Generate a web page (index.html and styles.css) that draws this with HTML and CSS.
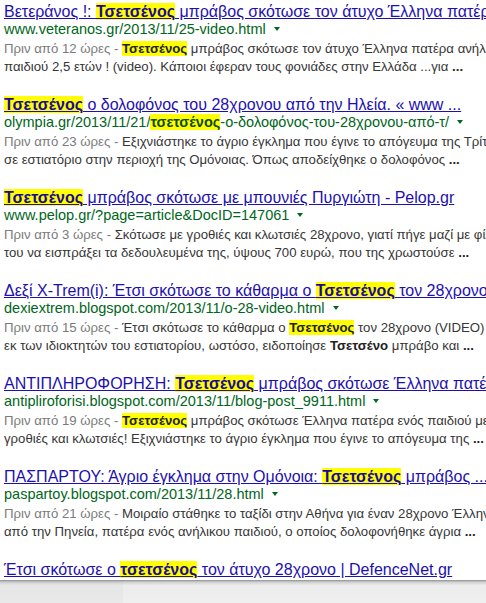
FILE: index.html
```html
<!DOCTYPE html>
<html lang="el">
<head>
<meta charset="utf-8">
<title>Τσετσένος - Αναζήτηση</title>
<link rel="stylesheet" href="styles.css">
</head>
<body>
<div class="page">
  <div class="results">

    <div class="result">
      <div class="title"><a href="#">Βετεράνος !: <b class="hl">Τσετσένος</b> μπράβος σκότωσε τον άτυχο Έλληνα πατέρα ...</a></div>
      <div class="url">www.veteranos.gr/2013/11/25-video.html<span class="caret"></span></div>
      <div class="snippet">
        <span class="line"><span class="date">Πριν από 12 ώρες - </span><b class="hl">Τσετσένος</b> μπράβος σκότωσε τον άτυχο Έλληνα πατέρα ανήλικου</span>
        <span class="line">παιδιού 2,5 ετών ! (video). Κάποιοι έφεραν τους φονιάδες στην Ελλάδα ...για <b>...</b></span>
      </div>
    </div>

    <div class="result">
      <div class="title"><a href="#"><b class="hl">Τσετσένος</b> ο δολοφόνος του 28χρονου από την Ηλεία. « www ...</a></div>
      <div class="url">olympia.gr/2013/11/21/<b class="hl">τσετσένος</b>-ο-δολοφόνος-του-28χρονου-από-τ/<span class="caret"></span></div>
      <div class="snippet">
        <span class="line"><span class="date">Πριν από 23 ώρες - </span>Εξιχνιάστηκε το άγριο έγκλημα που έγινε το απόγευμα της Τρίτης</span>
        <span class="line">σε εστιατόριο στην περιοχή της Ομόνοιας. Όπως αποδείχθηκε ο δολοφόνος <b>...</b></span>
      </div>
    </div>

    <div class="result">
      <div class="title"><a href="#"><b class="hl">Τσετσένος</b> μπράβος σκότωσε με μπουνιές Πυργιώτη - Pelop.gr</a></div>
      <div class="url">www.pelop.gr/?page=article&amp;DocID=147061<span class="caret"></span></div>
      <div class="snippet">
        <span class="line"><span class="date">Πριν από 3 ώρες - </span>Σκότωσε με γροθιές και κλωτσιές 28χρονο, γιατί πήγε μαζί με φίλο</span>
        <span class="line">του να εισπράξει τα δεδουλευμένα της, ύψους 700 ευρώ, που της χρωστούσε <b>...</b></span>
      </div>
    </div>

    <div class="result">
      <div class="title"><a href="#">Δεξί X-Trem(i): Έτσι σκότωσε το κάθαρμα ο <b class="hl">Τσετσένος</b> τον 28χρονο ...</a></div>
      <div class="url">dexiextrem.blogspot.com/2013/11/o-28-video.html<span class="caret"></span></div>
      <div class="snippet">
        <span class="line"><span class="date">Πριν από 15 ώρες - </span>Έτσι σκότωσε το κάθαρμα ο <b class="hl">Τσετσένος</b> τον 28χρονο (VIDEO) Ένας</span>
        <span class="line">εκ των ιδιοκτητών του εστιατορίου, ωστόσο, ειδοποίησε <b>Τσετσένο</b> μπράβο και <b>...</b></span>
      </div>
    </div>

    <div class="result">
      <div class="title"><a href="#">ΑΝΤΙΠΛΗΡΟΦΟΡΗΣΗ: <b class="hl">Τσετσένος</b> μπράβος σκότωσε Έλληνα πατέρα ...</a></div>
      <div class="url">antipliroforisi.blogspot.com/2013/11/blog-post_9911.html<span class="caret"></span></div>
      <div class="snippet">
        <span class="line"><span class="date">Πριν από 19 ώρες - </span><b class="hl">Τσετσένος</b> μπράβος σκότωσε Έλληνα πατέρα ενός παιδιού με</span>
        <span class="line">γροθιές και κλωτσιές! Εξιχνιάστηκε το άγριο έγκλημα που έγινε το απόγευμα της <b>...</b></span>
      </div>
    </div>

    <div class="result">
      <div class="title"><a href="#">ΠΑΣΠΑΡΤΟΥ: Άγριο έγκλημα στην Ομόνοια: <b class="hl">Τσετσένος</b> μπράβος ...</a></div>
      <div class="url">paspartoy.blogspot.com/2013/11/28.html<span class="caret"></span></div>
      <div class="snippet">
        <span class="line"><span class="date">Πριν από 21 ώρες - </span>Μοιραίο στάθηκε το ταξίδι στην Αθήνα για έναν 28χρονο Έλληνα</span>
        <span class="line">από την Πηνεία, πατέρα ενός ανήλικου παιδιού, ο οποίος δολοφονήθηκε άγρια <b>...</b></span>
      </div>
    </div>

    <div class="result">
      <div class="title"><a href="#">Έτσι σκότωσε ο <b class="hl">τσετσένος</b> τον άτυχο 28χρονο | DefenceNet.gr</a></div>
    </div>

  </div>
</div>
<div class="footer">
  <div class="footer-left"></div>
  <div class="footer-right"></div>
</div>
</body>
</html>
```

FILE: styles.css
```css
html, body {
  margin: 0;
  padding: 0;
  background: #ffffff;
}

body {
  font-family: "Liberation Sans", Arial, sans-serif;
  width: 486px;
  height: 603px;
  overflow: hidden;
}

.page {
  height: 580px;
  overflow: hidden;
}

.results {
  padding: 2px 0 0 4px;
  white-space: nowrap;
}

.result {
  margin-bottom: 19px;
}

.title {
  font-size: 16px;
  line-height: 20px;
}

.title a {
  color: #1d10b0;
  text-decoration: underline;
}

.title .hl {
  color: #1a0a9c;
}

.hl {
  background: #ffff00;
  font-weight: bold;
}

.url {
  font-size: 14.5px;
  line-height: 15px;
  color: #006621;
}

.url .hl {
  color: #0a4a1a;
}

.caret {
  display: inline-block;
  width: 0;
  height: 0;
  margin-left: 8px;
  vertical-align: 3px;
  border-left: 3.5px solid transparent;
  border-right: 3.5px solid transparent;
  border-top: 4px solid #006621;
}

.snippet {
  margin-top: 3px;
  font-size: 13.2px;
  line-height: 18px;
  color: #363636;
}

.snippet b {
  color: #222222;
}

.line {
  display: block;
}

.date {
  color: #7b7b7b;
}

.footer {
  height: 23px;
  display: flex;
}

.footer-left {
  width: 123px;
  background: linear-gradient(#8f8f8f 0, #c9c9c9 2px, #e6e6e6 5px, #e9e9e9 100%);
}

.footer-right {
  flex: 1;
  background: linear-gradient(#8f8f8f 0, #cdcdcd 2px, #ececec 5px, #efefef 100%);
}
```
